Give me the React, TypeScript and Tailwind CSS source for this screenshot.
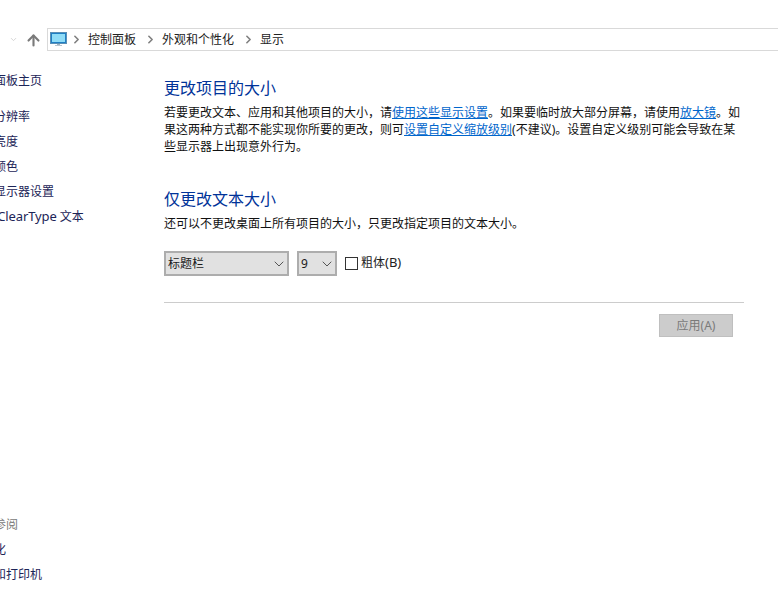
import { ArrowUp, ChevronDown, ChevronRight } from "lucide-react";

const crumbs = ["控制面板", "外观和个性化", "显示"];

function MonitorIcon() {
  return (
    <svg width="17" height="15" viewBox="0 0 17 15" className="shrink-0 -mr-[2px]">
      <rect x="0.5" y="0.5" width="16" height="11" fill="#1f7fc4" stroke="#5b8fb5" />
      <rect x="2" y="2" width="13" height="8" fill="#8fdcf7" />
      <rect x="7" y="12" width="3" height="1" fill="#9fb3c2" />
      <rect x="5" y="13" width="7" height="1" fill="#b9c6d0" />
    </svg>
  );
}

function SideLink({ children }: { children: React.ReactNode }) {
  return <div className="h-[25px] leading-[25px] whitespace-nowrap text-[#1c2457]">{children}</div>;
}

function Select({ label, className }: { label: string; className: string }) {
  return (
    <div className={`h-[25px] flex items-center justify-between border-2 border-[#adadad] bg-[#e1e1e1] pl-[2px] text-[#1a1a1a] ${className}`}>
      <span>{label}</span>
      <ChevronDown className="w-[16px] h-[16px] text-[#555]" strokeWidth={1.5} />
    </div>
  );
}

export default function App() {
  return (
    <div className="w-[778px] h-[603px] overflow-hidden bg-white text-[12px] text-[#111] font-['Noto_Sans','Noto_Sans_CJK_SC',sans-serif]">
      {/* Address bar */}
      <div className="flex items-center pt-[28px] h-[51px]">
        <div className="w-[47px] flex items-center shrink-0 pl-[9px] gap-[7px]">
          <ChevronDown className="w-[9px] h-[9px] text-[#c8c8c8]" strokeWidth={2} />
          <ArrowUp className="w-[17px] h-[17px] mt-[1px] text-[#7a7a7a]" strokeWidth={3} />
        </div>
        <div className="flex-1 h-[23px] flex items-center border border-r-0 border-[#d9d9d9] pl-[2px]">
          <MonitorIcon />
          {crumbs.map((c) => (
            <div key={c} className="flex items-center text-[#222]">
              <ChevronRight className="w-[13px] h-[13px] ml-[5px] mr-[3px] text-[#808080]" strokeWidth={3} />
              <span className="ml-[2px] mr-[3px]">{c}</span>
            </div>
          ))}
        </div>
      </div>

      <div className="flex h-[552px]">
        {/* Sidebar, cut off by the window's left edge */}
        <div className="w-[164px] shrink-0 flex flex-col -ml-[30px] mr-[30px] pt-[17px] pb-[16px]">
          <SideLink>控制面板主页</SideLink>
          <div className="h-[11px]" />
          <SideLink>调整分辨率</SideLink>
          <SideLink>调整亮度</SideLink>
          <SideLink>校准颜色</SideLink>
          <SideLink>更改显示器设置</SideLink>
          <SideLink>
            调整 <span className="text-[13px] tracking-[-0.1px]">ClearType</span> 文本
          </SideLink>
          <div className="mt-auto h-[25px] leading-[25px] text-[#7a7a7a]">另请参阅</div>
          <SideLink>个性化</SideLink>
          <SideLink>设备和打印机</SideLink>
        </div>

        {/* Main content */}
        <div className="w-[580px] shrink-0 pt-[25px]">
          <h2 className="text-[16px] leading-[24px] text-[#003399]">更改项目的大小</h2>
          <p className="mt-[4px] leading-[17px] w-[580px]">
            若要更改文本、应用和其他项目的大小，请
            <a className="text-[#0066cc] underline">使用这些显示设置</a>
            。如果要临时放大部分屏幕，请使用
            <a className="text-[#0066cc] underline">放大镜</a>
            。如果这两种方式都不能实现你所要的更改，则可
            <a className="text-[#0066cc] underline">设置自定义缩放级别</a>
            (不建议)。设置自定义级别可能会导致在某些显示器上出现意外行为。
          </p>

          <h2 className="mt-[32px] text-[16px] leading-[24px] text-[#003399]">仅更改文本大小</h2>
          <p className="mt-[4px] leading-[17px]">还可以不更改桌面上所有项目的大小，只更改指定项目的文本大小。</p>

          <div className="mt-[19px] flex items-center">
            <Select label="标题栏" className="w-[125px]" />
            <Select label="9" className="w-[40px] ml-[8px]" />
            <div className="ml-[8px] w-[13px] h-[13px] border border-[#333] bg-white" />
            <span className="ml-[3px] -mt-[2px] text-[#222]">
              粗体<span className="text-[13px]">(B)</span>
            </span>
          </div>

          <div className="mt-[26px] border-t border-[#cccccc]" />

          <div className="mt-[11px] flex justify-end pr-[11px]">
            <button className="w-[74px] h-[23px] border border-[#bfbfbf] bg-[#cccccc] text-[#7a7a7a]">应用(A)</button>
          </div>
        </div>
      </div>
    </div>
  );
}
